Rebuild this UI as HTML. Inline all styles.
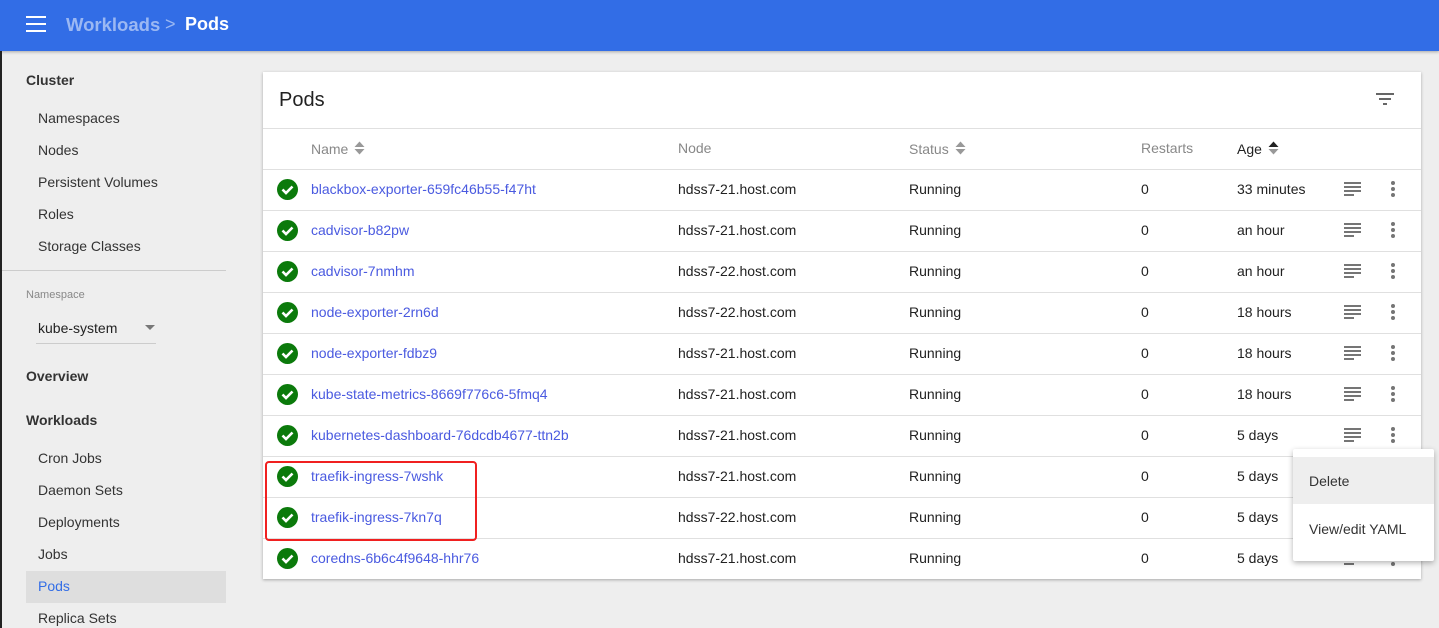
<!DOCTYPE html>
<html><head><meta charset="utf-8"><style>
*{box-sizing:border-box;margin:0;padding:0}
body{width:1439px;height:628px;overflow:hidden;background:#eeeeee;font-family:"Liberation Sans",Arial,sans-serif;position:relative;color:#212121}
.top{position:absolute;left:0;top:0;width:1439px;height:51px;background:#326de6;box-shadow:0 1px 3px rgba(0,0,0,.3)}
.lb{position:absolute;left:0;top:51px;width:2px;height:577px;background:#222}
.ham{position:absolute;left:26px;top:16px;width:20px}
.ham div{height:2px;background:#fff;margin-bottom:5px}
.bc{position:absolute;top:14px;font-size:18px;font-weight:bold}
.sb{position:absolute;font-size:14px;color:#333}
.sh{position:absolute;left:26px;font-size:14px;font-weight:bold;color:#333}
.card{position:absolute;left:263px;top:72px;width:1158px;height:507px;background:#fff;box-shadow:0 1px 3px rgba(0,0,0,.3)}
.row{position:absolute;left:0;width:1158px;height:41px;border-top:1px solid #e0e0e0;font-size:14px}
.row span{position:absolute;top:11px}
.chk{position:absolute;left:14px;top:9px;width:21px;height:21px;border-radius:50%;background:#0b7a0b}
.lk{color:#4a5ae0}
.hd{position:absolute;top:12px;font-size:14px;color:#888}
.hd svg{vertical-align:-2px;margin-left:6px}
.lines{position:absolute;left:1081px;top:12px;width:17px}
.lines div{height:2px;background:#757575;margin-bottom:2px}
.dots{position:absolute;left:1128px;top:11px;width:4px}
.dots div{width:4px;height:4px;border-radius:50%;background:#757575;margin-bottom:2px}
</style></head><body>
<div class="top">
<div class="ham"><div></div><div></div><div></div></div>
<div class="bc" style="left:66px;color:#9bb8f3;font-size:18.5px">Workloads</div>
<div class="bc" style="left:165px;color:#9bb8f3;font-weight:normal">&gt;</div>
<div class="bc" style="left:185px;color:#fff">Pods</div>
</div>
<div class="lb"></div>
<div class="sh" style="top:72px">Cluster</div>
<div class="sb" style="left:38px;top:110px">Namespaces</div>
<div class="sb" style="left:38px;top:142px">Nodes</div>
<div class="sb" style="left:38px;top:174px">Persistent Volumes</div>
<div class="sb" style="left:38px;top:206px">Roles</div>
<div class="sb" style="left:38px;top:238px">Storage Classes</div>
<div style="position:absolute;left:2px;top:270px;width:224px;height:1px;background:#ccc"></div>
<div class="sb" style="left:26px;top:289px;font-size:11px;color:#888">Namespace</div>
<div class="sb" style="left:38px;top:320px;color:#222">kube-system</div>
<div style="position:absolute;left:145px;top:325px;border:5px solid transparent;border-top-color:#777;border-bottom:0"></div>
<div style="position:absolute;left:36px;top:343px;width:120px;height:1px;background:#ccc"></div>
<div class="sh" style="top:368px">Overview</div>
<div class="sh" style="top:412px">Workloads</div>
<div class="sb" style="left:38px;top:450px">Cron Jobs</div>
<div class="sb" style="left:38px;top:482px">Daemon Sets</div>
<div class="sb" style="left:38px;top:514px">Deployments</div>
<div class="sb" style="left:38px;top:546px">Jobs</div>
<div style="position:absolute;left:26px;top:571px;width:200px;height:32px;background:#dedede"></div>
<div class="sb" style="left:38px;top:578px;color:#326de6">Pods</div>
<div class="sb" style="left:38px;top:610px">Replica Sets</div>

<div class="card">
<div style="position:absolute;left:16px;top:17px;font-size:20px;color:#222">Pods</div>
<div style="position:absolute;left:1113px;top:21px;width:18px"><div style="height:2px;background:#666;margin-bottom:3px"></div><div style="height:2px;background:#666;margin:0 3px 3px"></div><div style="height:2px;background:#666;margin:0 7px"></div></div>
<div class="row" style="top:56px;height:41px">
<span class="hd" style="left:48px">Name<svg width="11" height="16"><path d="M0.5 7L5.5 1.5 10.5 7z M0.5 9L5.5 14.5 10.5 9z" fill="#999"/></svg></span>
<span class="hd" style="left:415px">Node</span>
<span class="hd" style="left:646px">Status<svg width="11" height="16"><path d="M0.5 7L5.5 1.5 10.5 7z M0.5 9L5.5 14.5 10.5 9z" fill="#999"/></svg></span>
<span class="hd" style="left:878px">Restarts</span>
<span class="hd" style="left:974px;color:#222">Age<svg width="11" height="16"><path d="M0.5 7L5.5 1.5 10.5 7z" fill="#222"/><path d="M0.5 9L5.5 14.5 10.5 9z" fill="#999"/></svg></span>
</div>
<div id="rows"></div>
</div>
<div style="position:absolute;left:265px;top:461px;width:212px;height:80px;border:2px solid #f02020;border-radius:4px"></div>
<div style="position:absolute;left:1293px;top:449px;width:141px;height:112px;background:#fff;box-shadow:0 2px 6px rgba(0,0,0,.3);border-radius:2px">
<div style="position:absolute;left:0;top:8px;width:141px;height:47px;background:#eee"></div>
<div style="position:absolute;left:16px;top:24px;font-size:14px;color:#333">Delete</div>
<div style="position:absolute;left:16px;top:72px;font-size:14px;color:#333">View/edit YAML</div>
</div>
<script>
var d=[["blackbox-exporter-659fc46b55-f47ht","21","33 minutes"],["cadvisor-b82pw","21","an hour"],["cadvisor-7nmhm","22","an hour"],["node-exporter-2rn6d","22","18 hours"],["node-exporter-fdbz9","21","18 hours"],["kube-state-metrics-8669f776c6-5fmq4","21","18 hours"],["kubernetes-dashboard-76dcdb4677-ttn2b","21","5 days"],["traefik-ingress-7wshk","21","5 days"],["traefik-ingress-7kn7q","22","5 days"],["coredns-6b6c4f9648-hhr76","21","5 days"]];
var h="";d.forEach(function(r,i){h+='<div class="row" style="top:'+(97+41*i)+'px"><div class="chk"><svg width="21" height="21" viewBox="0 0 21 21"><path d="M5.5 10.5l3.5 3.5 6.5-6.5" stroke="#fff" stroke-width="2.6" fill="none"/></svg></div><span class="lk" style="left:48px">'+r[0]+'</span><span style="left:415px">hdss7-'+r[1]+'.host.com</span><span style="left:646px">Running</span><span style="left:878px">0</span><span style="left:974px">'+r[2]+'</span><div class="lines"><div></div><div></div><div></div><div style="width:60%"></div></div><div class="dots"><div></div><div></div><div></div></div></div>'});
document.getElementById("rows").innerHTML=h;
</script>
</body></html>
